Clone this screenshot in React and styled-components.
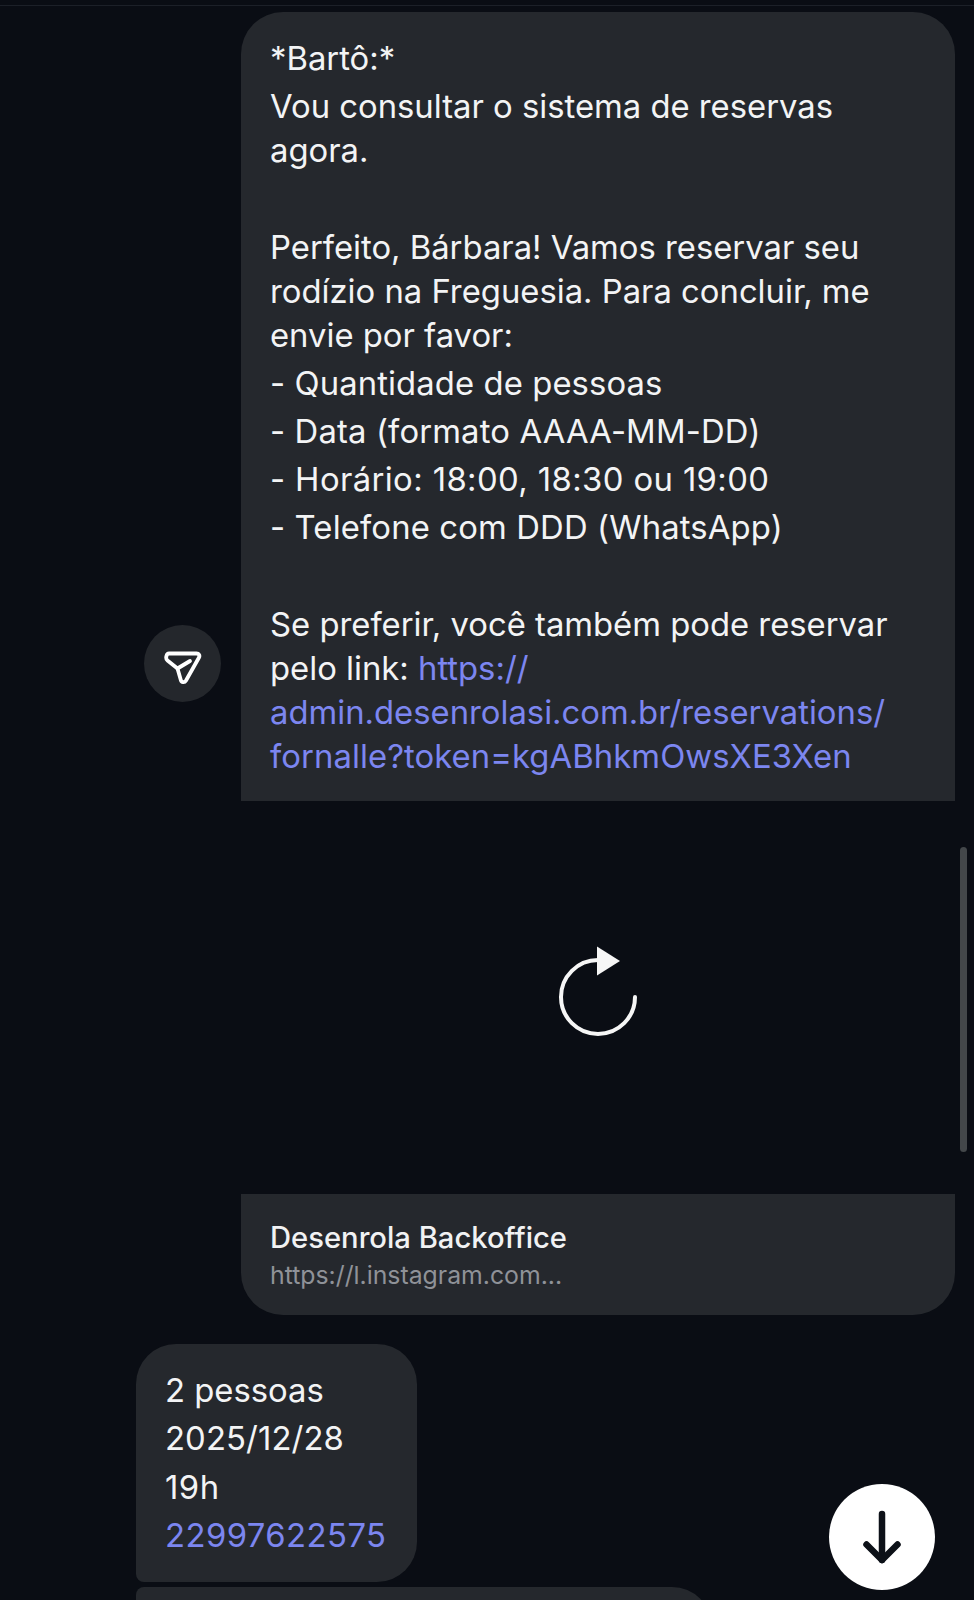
import React from "react"
import styled, { createGlobalStyle } from "styled-components"

const GlobalStyle = createGlobalStyle`
	html, body {
		margin: 0;
		padding: 0;
		background: #0a0d14;
	}
`

const Page = styled.div`
	position: relative;
	width: 974px;
	height: 1600px;
	overflow: hidden;
	box-sizing: border-box;
	background: #0a0d14;
	padding: 5px 19px 0 136px;
	font-family: Inter, "Liberation Sans", sans-serif;
	font-size: 32.8px;
	color: #f3f4f5;
	display: flex;
	flex-direction: column;
`

const TopRule = styled.div`
	flex-shrink: 0;
	height: 1px;
	margin: 0 -19px 6px -136px;
	background: #1c2028;
`

const Row = styled.div`
	flex-shrink: 0;
	display: flex;
	align-items: flex-end;
	justify-content: flex-end;
`

const ShareCircle = styled.div`
	width: 77px;
	height: 77px;
	box-sizing: border-box;
	padding-top: 10px;
	border-radius: 50%;
	background: #24272c;
	display: flex;
	align-items: center;
	justify-content: center;
	margin-right: 20px;
	margin-bottom: 99px;
	color: #fff;
`

const Card = styled.div`
	width: 714px;
	box-sizing: border-box;
	background: #25282d;
	border-radius: 42px 42px 0 0;
	padding: 24px 28px 19px 29px;
`

const Line = styled.div`
	line-height: 44px;
	min-height: 44px;
	margin-bottom: ${(p) => p.$gap || 4.2}px;
	letter-spacing: ${(p) => p.$tracking || 0}px;
`

const Link = styled.span`
	color: #7c86f0;
	letter-spacing: ${(p) => p.$tracking || 0}px;
`

const Preview = styled.div`
	flex-shrink: 0;
	align-self: flex-end;
	width: 714px;
	height: 393px;
	display: flex;
	align-items: center;
	justify-content: center;
`

const LinkFooter = styled.div`
	flex-shrink: 0;
	align-self: flex-end;
	width: 714px;
	box-sizing: border-box;
	background: #25282d;
	border-radius: 0 0 42px 42px;
	padding: 26px 30px 21px 29px;
`

const FooterTitle = styled.div`
	font-size: 29.2px;
	font-weight: 500;
	line-height: 36px;
	color: #f1f2f3;
`

const FooterUrl = styled.div`
	font-size: 24.8px;
	line-height: 38px;
	color: #8f9298;
`

const Reply = styled.div`
	flex-shrink: 0;
	align-self: flex-start;
	width: 281px;
	box-sizing: border-box;
	margin-top: 29px;
	background: #25282d;
	border-radius: 40px 40px 40px 8px;
	padding: 24px 28px 20px 29px;
`

const NextReply = styled.div`
	flex-shrink: 0;
	align-self: flex-start;
	width: 576px;
	height: 60px;
	margin-top: 5px;
	background: #25282d;
	border-radius: 8px 40px 0 0;
`

const ScrollThumb = styled.div`
	position: absolute;
	left: 960px;
	top: 847px;
	width: 7px;
	height: 305px;
	border-radius: 4px;
	background: #43474a;
`

const DownButton = styled.div`
	position: absolute;
	left: 829px;
	top: 1484px;
	width: 106px;
	height: 106px;
	border-radius: 50%;
	background: #fff;
	display: flex;
	align-items: center;
	justify-content: center;
	color: #0d1118;
`

const ShareIcon = () => (
	<svg width="38" height="34" viewBox="0 0 38 34" fill="none" stroke="currentColor" strokeWidth="3.8" strokeLinecap="round" strokeLinejoin="round">
		<path d="M5 2.5H32.5C35 2.5 36 4.5 35 6.5L22 29.5C20.5 32 17.5 31.5 16.8 29L13.5 17.5L3.5 9.5C1 7.5 2.5 2.5 5 2.5Z" />
		<path d="M13.5 17.5L26 10" />
	</svg>
)

const ReloadIcon = () => (
	<svg width="80" height="104" viewBox="0 0 80 104" fill="none">
		<path d="M40 15A37 37 0 1 0 77 52" stroke="#f6f6f6" strokeWidth="4" strokeLinecap="round" />
		<path d="M39 1.5 62 16 39 30.5Z" fill="#f6f6f6" />
	</svg>
)

const ArrowIcon = () => (
	<svg width="42" height="54" viewBox="0 0 42 54" fill="none" stroke="currentColor" strokeWidth="6.5" strokeLinecap="round" strokeLinejoin="round">
		<path d="M21 4V50" />
		<path d="M5.5 34.5L21 50L36.5 34.5" />
	</svg>
)

export default function App() {
	return (
		<Page>
			<GlobalStyle />
			<TopRule />
			<Row>
				<ShareCircle>
					<ShareIcon />
				</ShareCircle>
				<Card>
					<Line>*Bartô:*</Line>
					<Line>Vou consultar o sistema de reservas agora.</Line>
					<Line />
					<Line>Perfeito, Bárbara! Vamos reservar seu rodízio na Freguesia. Para concluir, me envie por favor:</Line>
					<Line $tracking={0.1}>- Quantidade de pessoas</Line>
					<Line $tracking={0.15}>- Data (formato AAAA-MM-DD)</Line>
					<Line $tracking={0.4}>- Horário: 18:00, 18:30 ou 19:00</Line>
					<Line $tracking={0.15}>- Telefone com DDD (WhatsApp)</Line>
					<Line />
					<Line>
						Se preferir, você também pode reservar
						<br />
						pelo link: <Link>https://</Link>
						<br />
						<Link>admin.desenrolasi.com.br/reservations/</Link>
						<br />
						<Link $tracking={0.08}>fornalle?token=kgABhkmOwsXE3Xen</Link>
					</Line>
				</Card>
			</Row>
			<Preview>
				<ReloadIcon />
			</Preview>
			<LinkFooter>
				<FooterTitle>Desenrola Backoffice</FooterTitle>
				<FooterUrl>https://l.instagram.com...</FooterUrl>
			</LinkFooter>
			<Reply>
				<Line $gap={4.5}>2 pessoas</Line>
				<Line $gap={4.5} $tracking={0.1}>2025/12/28</Line>
				<Line $gap={4.5} $tracking={0.5}>19h</Line>
				<Line $gap={4.5}><Link $tracking={0.45}>22997622575</Link></Line>
			</Reply>
			<NextReply />
			<ScrollThumb />
			<DownButton>
				<ArrowIcon />
			</DownButton>
		</Page>
	)
}
